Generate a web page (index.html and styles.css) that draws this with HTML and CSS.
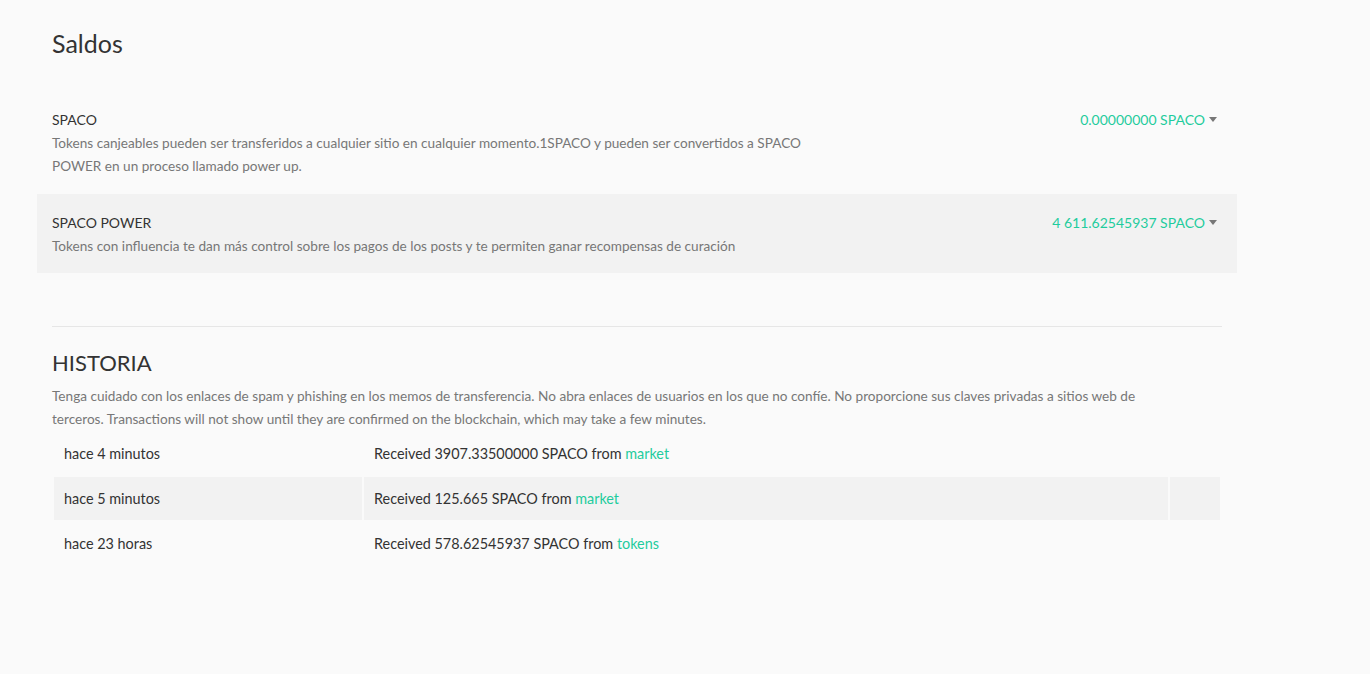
FILE: index.html
```html
<!DOCTYPE html>
<html lang="es">
<head>
    <meta charset="UTF-8">
    <title>Saldos</title>
    <link rel="stylesheet" href="styles.css">
</head>
<body>
    <div class="wallet">
        <h2 class="title">Saldos</h2>

        <div class="balances">
            <div class="balance-row">
                <div class="balance-info">
                    <div class="balance-name">SPACO</div>
                    <div class="balance-desc">Tokens canjeables pueden ser transferidos a cualquier sitio en cualquier momento.1SPACO y pueden ser convertidos a SPACO POWER en un proceso llamado power up.</div>
                </div>
                <div class="balance-value">
                    <span class="amount">0.00000000 SPACO</span><span class="caret"></span>
                </div>
            </div>
            <div class="balance-row shaded">
                <div class="balance-info">
                    <div class="balance-name">SPACO POWER</div>
                    <div class="balance-desc">Tokens con influencia te dan más control sobre los pagos de los posts y te permiten ganar recompensas de curación</div>
                </div>
                <div class="balance-value">
                    <span class="amount">4 611.62545937 SPACO</span><span class="caret"></span>
                </div>
            </div>
        </div>

        <div class="history">
            <hr>
            <h2 class="title">HISTORIA</h2>
            <p class="history-note">Tenga cuidado con los enlaces de spam y phishing en los memos de transferencia. No abra enlaces de usuarios en los que no confíe. No proporcione sus claves privadas a sitios web de terceros. Transactions will not show until they are confirmed on the blockchain, which may take a few minutes.</p>
            <table class="history-table">
                <tbody>
                    <tr>
                        <td class="when">hace 4 minutos</td>
                        <td class="what">Received 3907.33500000 SPACO from <a href="#">market</a></td>
                        <td class="memo"></td>
                    </tr>
                    <tr>
                        <td class="when">hace 5 minutos</td>
                        <td class="what">Received 125.665 SPACO from <a href="#">market</a></td>
                        <td class="memo"></td>
                    </tr>
                    <tr>
                        <td class="when">hace 23 horas</td>
                        <td class="what">Received 578.62545937 SPACO from <a href="#">tokens</a></td>
                        <td class="memo"></td>
                    </tr>
                </tbody>
            </table>
        </div>
    </div>
</body>
</html>
```

FILE: styles.css
```css
body {
    margin: 0;
    background-color: #fafafa;
    font-family: "Source Sans Pro", Lato, "Liberation Sans", sans-serif;
    color: #333;
}
.wallet {
    width: 1200px;
    margin-left: 37px;
    padding-top: 28px;
}
.title {
    margin: 0;
    padding: 0 15px;
    font-size: 25px;
    font-weight: 400;
    line-height: 30px;
    color: #333;
}
.balances {
    margin-top: 33px;
}
.balance-row {
    display: flex;
    justify-content: space-between;
    padding: 17px 20px 16px 15px;
}
.balance-row.shaded {
    background-color: #f2f2f2;
    padding-top: 17px;
    padding-bottom: 15px;
}
.balance-info {
    width: 770px;
}
.balance-name {
    font-size: 14px;
    line-height: 24px;
}
.balance-desc {
    font-size: 13.6px;
    line-height: 23px;
    color: #777;
}
.balance-value {
    display: flex;
    align-items: flex-start;
    padding-top: 4px;
}
.amount {
    font-size: 14px;
    line-height: 16px;
    color: #1fcc9d;
}
.caret {
    width: 0;
    height: 0;
    margin: 5px 0 0 4px;
    border-left: 4.5px solid transparent;
    border-right: 4.5px solid transparent;
    border-top: 5px solid #777;
}
.history {
    padding: 0 15px;
    margin-top: 53px;
}
.history hr {
    margin: 0;
    border: 0;
    border-top: 1px solid #e6e6e6;
}
.history .title {
    padding: 0;
    margin-top: 21px;
    font-size: 22px;
}
.history-note {
    max-width: 1100px;
    margin: 7px 0 0;
    font-size: 13.6px;
    line-height: 23px;
    color: #777;
}
.history-table {
    width: 100%;
    margin-top: -1px;
    border-collapse: separate;
    border-spacing: 2px 2px;
    font-size: 14.4px;
}
.history-table td {
    height: 43px;
    padding: 0 10px;
    vertical-align: middle;
}
.history-table tr:nth-child(2) td {
    background-color: #f2f2f2;
}
.history-table .when {
    width: 288px;
}
.history-table .memo {
    width: 30px;
}
.history-table a {
    color: #1fcc9d;
    text-decoration: none;
}
```
